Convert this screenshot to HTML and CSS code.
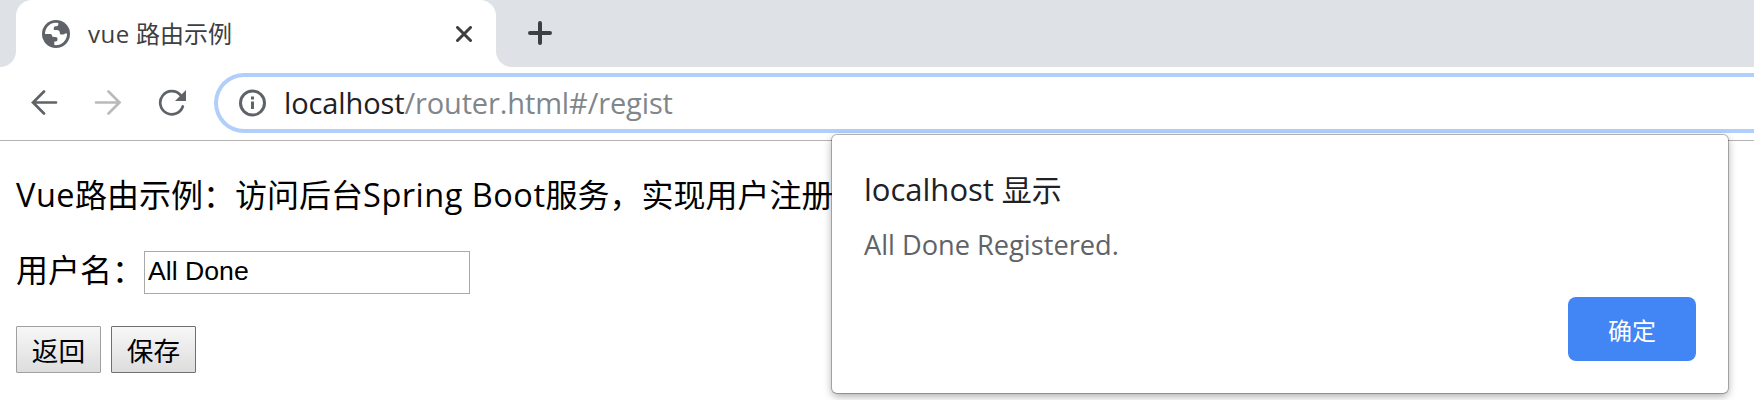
FILE: index.html
```html
<!DOCTYPE html>
<html lang="zh-CN">
<head>
<meta charset="utf-8">
<title>vue 路由示例</title>
<link rel="stylesheet" href="styles.css">
</head>
<body>
<div class="browser">
  <header class="tabstrip">
    <div class="tab">
      <svg class="favicon" viewBox="0 0 28 28"><circle cx="14" cy="14" r="14" fill="#5f6368"/><path d="M3 14A11 11 0 0 1 16.300 3v1.500q0 1.700-1.800 1.700h-1.200q-1.500 0-1.500 1.500v2.300h3q3 0 3 2.500v.5q0 1.500 1.500 1.500h1.700q1.500 0 2-1h2A11 11 0 0 1 12.300 25v-3.500h1.500q1.700 0 1.700-1.800v-.9q0-1.800-1.900-1.800h-1.600q-2 0-2-1.500T8.500 14z" fill="#fff"/></svg>
      <span class="tab-title"><span class="lat">vue</span> 路由示例</span>
      <svg class="close" viewBox="0 0 16 16"><path d="M1.500 1.500l13 13M14.500 1.500l-13 13"/></svg>
    </div>
    <svg class="plus" viewBox="0 0 24 24"><path d="M12 2v20M2 12h20"/></svg>
  </header>
  <nav class="toolbar">
    <svg class="nav-icon" viewBox="0 0 28 28"><path d="M26 13.500H3.500M14 2.500L3 13.500L14 24.500"/></svg>
    <svg class="nav-icon disabled" viewBox="0 0 28 28"><path d="M2 13.500h23M14.500 2.500L25.500 13.500L14.500 24.500"/></svg>
    <svg class="nav-icon" viewBox="0 0 28 28"><path d="M24.800 17.500A11.600 11.600 0 1 1 22.500 6"/><path class="solid" d="M28 1v11H17z"/></svg>
    <div class="omnibox">
      <svg class="info" viewBox="0 0 28 28"><circle cx="14.500" cy="14" r="12"/><path d="M14.500 12.500v7.500M14.500 7.500v3"/></svg>
      <span class="url"><b class="host">localhost</b>/router.html#/regist</span>
    </div>
  </nav>
  <main class="page">
    <p class="intro"><span class="lat">Vue</span>路由示例：访问后台<span class="lat">Spring Boot</span>服务，实现用户注册</p>
    <div class="field"><label for="name">用户名：</label><input id="name" type="text" value="All Done"></div>
    <div class="actions"><button class="btn">返回</button><button class="btn focused">保存</button></div>
  </main>
  <section class="dialog">
    <h1 class="dialog-title"><span class="lat">localhost</span> 显示</h1>
    <p class="dialog-message">All Done Registered.</p>
    <button class="ok">确定</button>
  </section>
</div>
</body>
</html>
```
FILE: styles.css
```css
* { box-sizing: border-box; }
body { margin: 0; font-family: "Open Sans", "Noto Sans CJK SC", sans-serif; background: #fff; }
.browser { position: relative; width: 1754px; height: 400px; overflow: hidden; }
.tabstrip { display: flex; height: 67px; padding-left: 16px; background: #dee1e6; }
.tab { position: relative; display: flex; align-items: center; width: 480px; height: 67px; padding: 0 24px 0 26px; background: #fff; border-radius: 16px 16px 0 0; }
.tab::before, .tab::after { content: ""; position: absolute; bottom: 0; width: 16px; height: 16px; }
.tab::before { left: -16px; background: radial-gradient(circle at 0 0, #dee1e6 15.500px, #fff 16.500px); }
.tab::after { right: -16px; background: radial-gradient(circle at 100% 0, #dee1e6 15.500px, #fff 16.500px); }
.favicon { width: 28px; height: 28px; margin-right: 18px; }
.tab-title { flex: 1; font-size: 24px; line-height: 32px; color: #3c4043; white-space: nowrap; }
.tab-title .lat { letter-spacing: .5px; }
.close { width: 16px; height: 16px; fill: none; stroke: #3c4043; stroke-width: 3; stroke-linecap: round; }
.plus { width: 24px; height: 24px; margin: 21px 0 0 32px; fill: none; stroke: #3c4043; stroke-width: 4; stroke-linecap: round; }
.toolbar { display: flex; align-items: flex-start; height: 74px; padding: 6px 0 0 30px; border-bottom: 1px solid #b4b4b4; }
.nav-icon { width: 28px; height: 28px; margin: 16px 36px 0 0; fill: none; stroke: #5f6368; stroke-width: 2.700; stroke-linecap: round; }
.nav-icon.disabled { stroke: #bababa; }
.nav-icon .solid { fill: #5f6368; stroke: none; }
.omnibox { display: flex; flex: 1; align-items: center; height: 60px; margin-left: -8px; padding-left: 20px; border: 4px solid #b2cefb; border-right: 0; border-radius: 30px 0 0 30px; }
.info { width: 28px; height: 28px; margin-right: 18px; fill: none; stroke: #5f6368; stroke-width: 3; }
.url { margin-top: -1px; font-size: 29px; line-height: 40px; letter-spacing: -.120px; color: #80868b; }
.host { font-weight: 400; color: #202124; }
.page { padding: 32px 16px 0; color: #000; }
.intro { height: 44px; margin: 0; font-size: 32px; line-height: 44px; white-space: nowrap; }
.intro .lat { font-size: 32.500px; letter-spacing: .5px; }
.field { display: flex; height: 44px; margin-top: 34px; font-size: 32px; line-height: 37px; }
.field input { width: 326px; height: 43px; padding: 0 3px 2px; border: 1px solid #a9a9a9; font: 26.670px "Liberation Sans", sans-serif; color: #000; }
.actions { display: flex; gap: 10px; margin-top: 31px; }
.btn { width: 85px; height: 47px; padding: 0; border: 1px solid #a0a0a0; border-radius: 1px; background: linear-gradient(#f7f7f7, #dddddd); font: 26.670px/44px "Noto Sans CJK SC", sans-serif; color: #000; }
.btn.focused { border-color: #707070; }
.dialog { position: absolute; left: 832px; top: 135px; display: flex; flex-direction: column; width: 896px; height: 258px; padding: 31px 32px 31px; background: #fff; border-radius: 5px; box-shadow: 0 0 0 1px rgba(0,0,0,.25), 0 3px 8px rgba(0,0,0,.35); }
.dialog-title { height: 48px; margin: 0; font-size: 30px; line-height: 46px; font-weight: 400; color: #202124; }
.dialog-title .lat { font-size: 31px; letter-spacing: 0; }
.dialog-message { margin: 7px 0 0; font-size: 27.200px; line-height: 48px; color: #5f6368; }
.ok { align-self: flex-end; width: 128px; height: 64px; margin-top: 28px; border: 0; border-radius: 8px; background: #4285f4; font: 24px "Noto Sans CJK SC", sans-serif; color: #fff; }
```
